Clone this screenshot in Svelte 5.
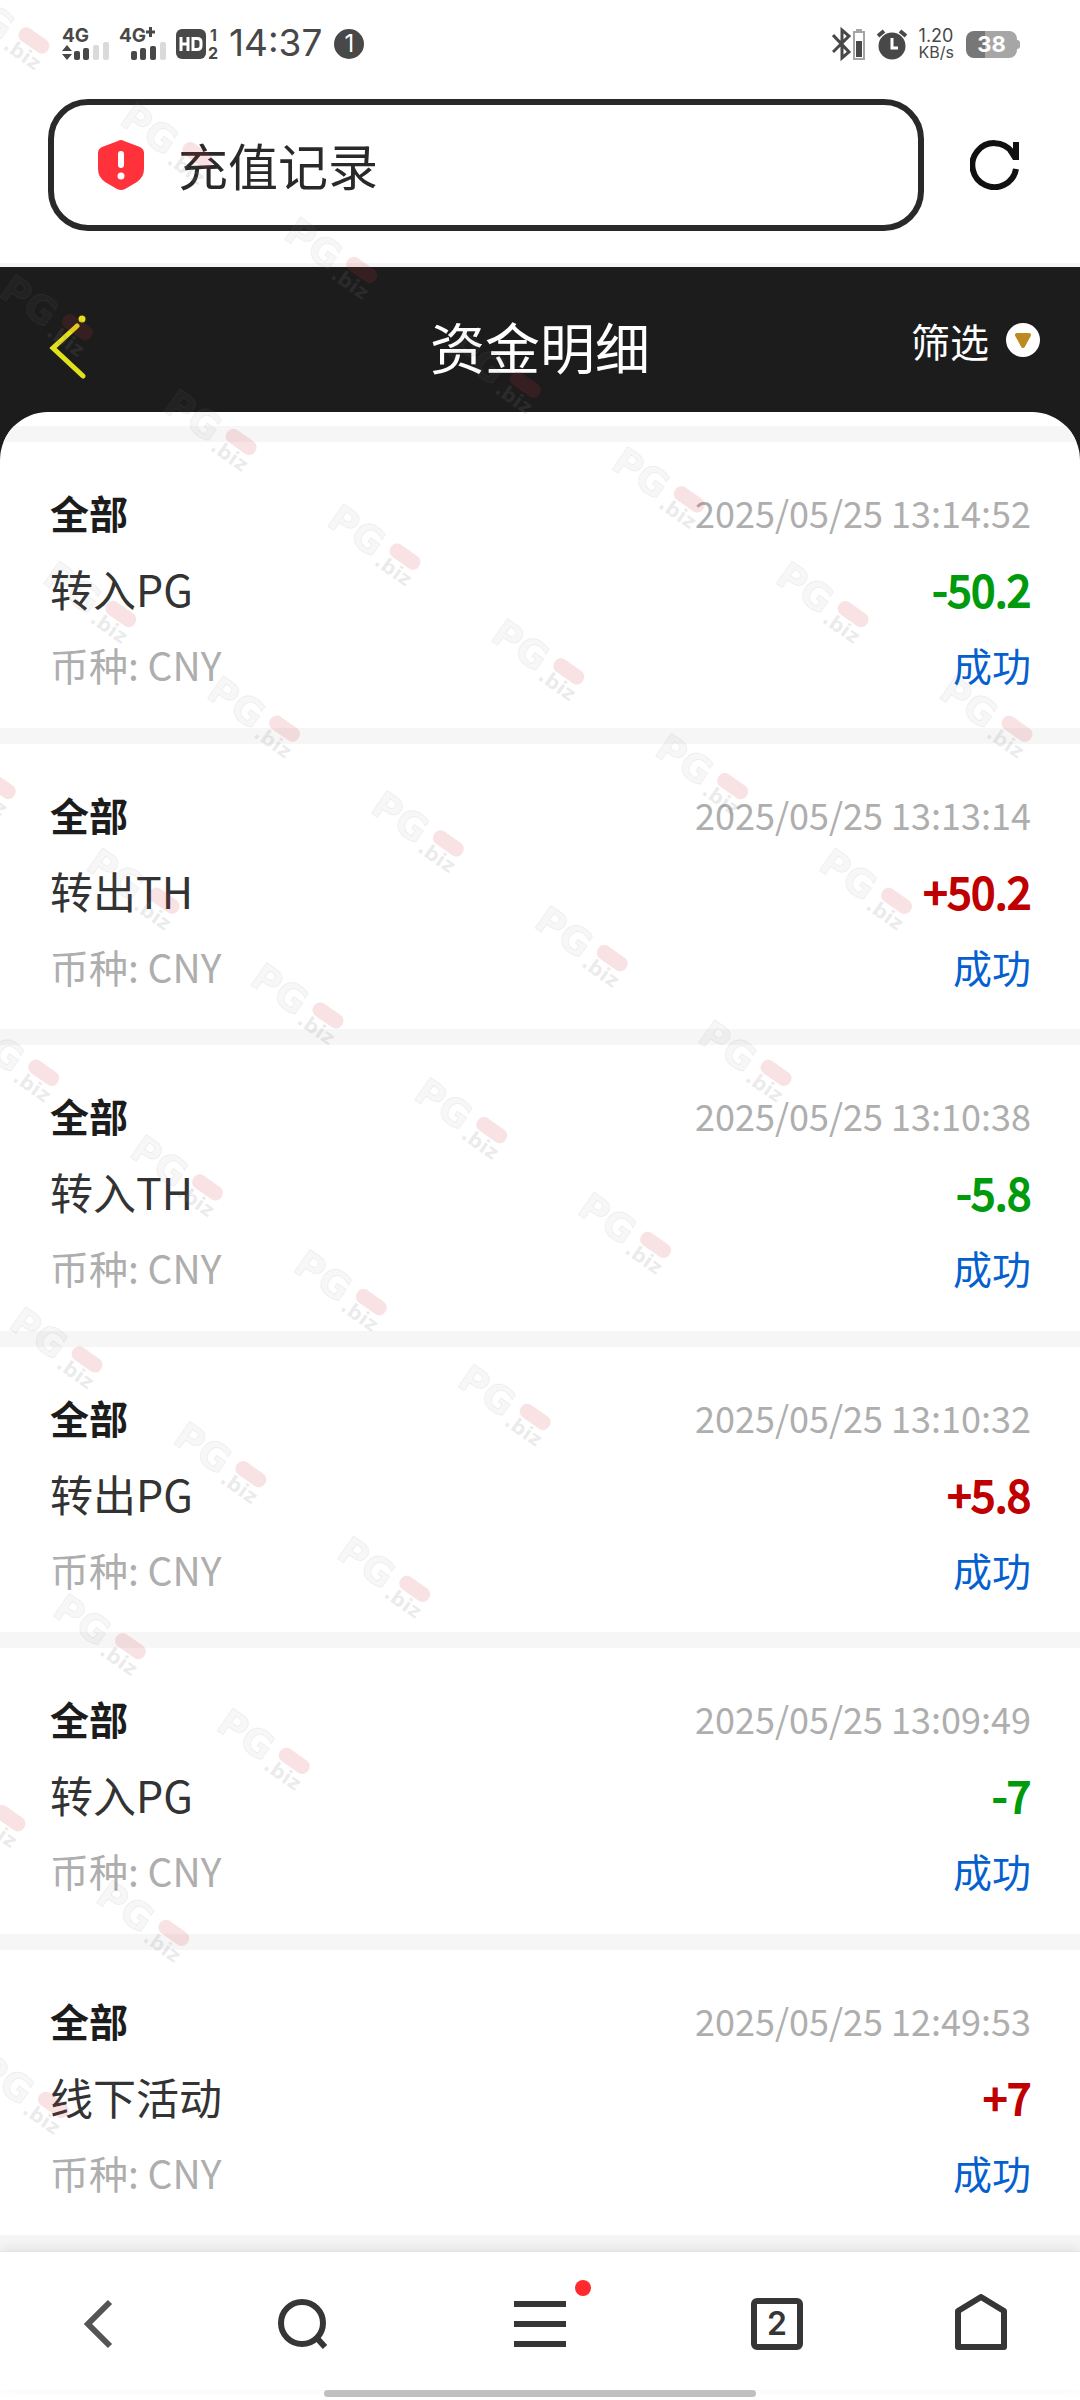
<script lang="ts">
    type Entry = { type: string; time: string; amount: string };

    const entries: Entry[] = [
        { type: '转入PG', time: '2025/05/25 13:14:52', amount: '-50.2' },
        { type: '转出TH', time: '2025/05/25 13:13:14', amount: '+50.2' },
        { type: '转入TH', time: '2025/05/25 13:10:38', amount: '-5.8' },
        { type: '转出PG', time: '2025/05/25 13:10:32', amount: '+5.8' },
        { type: '转入PG', time: '2025/05/25 13:09:49', amount: '-7' },
        { type: '线下活动', time: '2025/05/25 12:49:53', amount: '+7' }
    ];

    // --- Watermark grid, tilted 35deg: columns run down-right, rows down-left ---
    const stepX = 200;
    const stepY = 210;
    const lastCol = 5;
    // first column of each row that still reaches the screen
    const firstCols = [-1, 0, 1, 1, 2, 3, 4, 4, 5];
    const marks = firstCols.flatMap((first, row) =>
        Array.from({ length: lastCol - first + 1 }, (_, i) => ({ x: (first + i) * stepX, y: row * stepY }))
    );
</script>

<div class="screen">
    <header class="status">
        <div class="status-group">
            <svg width="48" height="36" viewBox="0 0 48 36" aria-label="4G">
                <text class="net" x="0" y="16">4G</text>
                <path d="M0 25L5 19L10 25ZM0 28L5 34L10 28Z" fill="#484848" />
                <rect x="12" y="25" width="6" height="9" rx="2" fill="#484848" />
                <rect x="21" y="22" width="6" height="12" rx="2" fill="#484848" />
                <rect x="31" y="19" width="6" height="15" rx="2" fill="#dadada" />
                <rect x="41" y="16" width="6" height="18" rx="2" fill="#dadada" />
            </svg>
            <svg width="48" height="36" viewBox="0 0 48 36" aria-label="4G+">
                <text class="net" x="0" y="16">4G</text>
                <path d="M27 6H36M31.500 1V11" stroke="#484848" stroke-width="3" />
                <rect x="12" y="25" width="6" height="9" rx="2" fill="#484848" />
                <rect x="21" y="22" width="6" height="12" rx="2" fill="#484848" />
                <rect x="31" y="20" width="6" height="14" rx="2" fill="#484848" />
                <rect x="41" y="16" width="6" height="18" rx="2" fill="#dadada" />
            </svg>
            <svg width="44" height="36" viewBox="0 0 44 36" aria-label="HD">
                <rect x="0" y="3" width="30" height="30" rx="6" fill="#484848" />
                <path d="M5 11V25M12 11V25M5 18H12M17 12.500H21Q25 12.500 25 16V20Q25 23.500 21 23.500H17Z" fill="none" stroke="#fff" stroke-width="3" />
                <text class="sim" x="34" y="15">1</text>
                <text class="sim" x="32" y="33">2</text>
            </svg>
            <span class="clock">14:37</span>
            <span class="notice">1</span>
        </div>
        <div class="status-group right">
            <svg width="33" height="36" viewBox="0 0 33 36" aria-label="蓝牙">
                <path d="M1 9L17 26L10 32V4L17 10L1 26" fill="none" stroke="#484848" stroke-width="3" />
                <rect x="22" y="6" width="10" height="27" fill="none" stroke="#a5a5a5" stroke-width="2" />
                <path d="M24 4H30" stroke="#a5a5a5" stroke-width="2" />
                <rect x="24" y="15" width="6" height="16" fill="#484848" />
            </svg>
            <svg width="30" height="36" viewBox="0 0 30 36" aria-label="闹钟">
                <circle cx="15" cy="20" r="13.500" fill="#484848" />
                <path d="M1 10L7 5M29 10L23 5" stroke="#484848" stroke-width="4" />
                <path d="M15 12V22H21" fill="none" stroke="#fff" stroke-width="3" />
            </svg>
            <span class="speed"><span>1.20</span><small>KB/s</small></span>
            <span class="battery">38</span>
        </div>
    </header>

    <div class="browser-bar">
        <button class="address">
            <svg width="46" height="50" viewBox="0 0 46 50" aria-hidden="true">
                <path d="M20 1Q23 -1 26 1L42 7Q46 9 46 13V29Q46 37 39 42L27 49Q23 51 19 49L7 42Q0 37 0 29V13Q0 9 4 7Z" fill="#ff313b" />
                <path d="M23 14V25" stroke="#fff" stroke-width="6" stroke-linecap="round" />
                <circle cx="23" cy="36" r="3.500" fill="#fff" />
            </svg>
            <span>充值记录</span>
        </button>
        <button aria-label="刷新">
            <svg width="50" height="50" viewBox="0 0 50 50">
                <path d="M46 29A22 22 0 1 1 42 12" fill="none" stroke="#111" stroke-width="6" />
                <path d="M43 2H49V20H43L38 12L43 9Z" fill="#111" />
            </svg>
        </button>
    </div>

    <main>
        <div class="title-bar">
            <button class="back" aria-label="返回">
                <svg width="38" height="64" viewBox="0 0 38 64">
                    <path d="M28 11L4 33L34 61" fill="none" stroke="#e2e21c" stroke-width="5" stroke-linecap="round" />
                    <circle cx="33" cy="4" r="3.500" fill="#e2e21c" />
                </svg>
            </button>
            <h1>资金明细</h1>
            <button class="filter">
                筛选
                <svg width="34" height="34" viewBox="0 0 34 34" aria-hidden="true">
                    <circle cx="17" cy="17" r="17" fill="#fff" />
                    <path d="M11 12H23L17 23Z" fill="#bb8a20" stroke="#bb8a20" stroke-width="4" stroke-linejoin="round" />
                </svg>
            </button>
        </div>

        <ul class="list">
            {#each entries as entry}
                <li class="entry">
                    <div class="row">
                        <strong>全部</strong>
                        <time>{entry.time}</time>
                    </div>
                    <div class="row">
                        <span class="type">{entry.type}</span>
                        <span class="amount" class:out={entry.amount.startsWith('-')}>{entry.amount}</span>
                    </div>
                    <div class="row">
                        <span class="currency">币种: CNY</span>
                        <span class="state">成功</span>
                    </div>
                </li>
            {/each}
        </ul>
    </main>

    <nav>
        <button aria-label="后退">
            <svg width="52" height="60" viewBox="0 0 52 60">
                <path d="M37 8L15 30L37 52" fill="none" stroke="#555" stroke-width="6" />
            </svg>
        </button>
        <button aria-label="搜索">
            <svg width="52" height="60" viewBox="0 0 52 60">
                <circle cx="25" cy="29" r="21" fill="none" stroke="#363636" stroke-width="6" />
                <path d="M38 42L48 53" stroke="#363636" stroke-width="6" />
            </svg>
        </button>
        <button aria-label="菜单">
            <span class="menu">
                <svg width="52" height="60" viewBox="0 0 52 60">
                    <path d="M0 10H52M0 30H52M0 50H52" stroke="#363636" stroke-width="6" />
                </svg>
                <span class="dot"></span>
            </span>
        </button>
        <button aria-label="标签页"><span class="tabs">2</span></button>
        <button aria-label="主页">
            <svg width="52" height="60" viewBox="0 0 52 60">
                <path d="M26 3L49 17V53H3V17Z" fill="none" stroke="#363636" stroke-width="6" stroke-linejoin="round" />
            </svg>
        </button>
    </nav>
    <div class="home-indicator"></div>

    <svg class="watermark" aria-hidden="true">
        <g transform="translate(136 104) rotate(35)">
            {#each marks as mark}
                <g transform="translate({mark.x} {mark.y})">
                    <text class="mark-name" x="-4" y="26">PG</text>
                    <rect x="63" y="-1" width="34" height="15" rx="7" fill="#d8323c" fill-opacity="0.14" />
                    <text class="mark-domain" x="58" y="31">.biz</text>
                </g>
            {/each}
        </g>
    </svg>
</div>

<style>
    :global(body) {
        margin: 0;
        background: #fff;
    }

    .screen {
        position: relative;
        display: flex;
        flex-direction: column;
        min-height: 100vh;
        overflow: hidden;
        font-family: 'Noto Sans CJK SC', sans-serif;
        color: #1c1c1c;
    }

    button {
        display: flex;
        align-items: center;
        margin: 0;
        padding: 0;
        border: 0;
        background: none;
        color: inherit;
        font: inherit;
    }

    svg {
        display: block;
        flex: none;
    }

    .status {
        display: flex;
        align-items: center;
        justify-content: space-between;
        height: 36px;
        padding: 26px 63px 0 62px;
        font-family: Inter, sans-serif;
        color: #484848;
    }

    .status-group {
        display: flex;
        align-items: center;
        gap: 9px;
    }

    .right {
        gap: 12px;
    }

    .net {
        font-size: 19px;
        font-weight: 700;
        fill: #484848;
    }

    .sim {
        font-size: 16px;
        font-weight: 700;
        fill: #484848;
    }

    .clock {
        font-size: 37px;
        line-height: 34px;
        padding-bottom: 2px;
    }

    .notice {
        width: 30px;
        margin-left: 3px;
        border-radius: 50%;
        background: #484848;
        color: #fff;
        font-size: 24px;
        line-height: 30px;
        text-align: center;
    }

    .speed {
        display: flex;
        flex-direction: column;
        font-size: 18px;
        line-height: 17px;
    }

    .speed small {
        font-size: 16px;
    }

    .battery {
        position: relative;
        width: 51px;
        border-radius: 8px;
        background: linear-gradient(90deg, #777 38%, #a6a6a6 38%);
        color: #fff;
        font-size: 22px;
        font-weight: 700;
        line-height: 27px;
        text-align: center;
    }

    .battery::after {
        content: '';
        position: absolute;
        top: 9px;
        right: -3px;
        width: 3px;
        height: 9px;
        border-radius: 0 3px 3px 0;
        background: #a6a6a6;
    }

    .browser-bar {
        display: flex;
        align-items: center;
        gap: 46px;
        padding: 37px 60px 32px 48px;
        border-bottom: 4px solid #f5f5f5;
    }

    .address {
        flex: 1;
        gap: 34px;
        height: 132px;
        padding: 0 44px;
        border: 6px solid #292929;
        border-radius: 40px;
        color: #292929;
        font-size: 50px;
    }

    .address span {
        padding-bottom: 2px;
    }

    main {
        flex: 1;
        display: flex;
        flex-direction: column;
        background: #1c1c1c;
    }

    .title-bar {
        display: grid;
        grid-template-columns: 1fr auto 1fr;
        align-items: center;
        height: 131px;
        padding: 14px 40px 0;
        color: #fff;
    }

    .back {
        justify-self: start;
        margin-left: 9px;
    }

    h1 {
        margin: 0;
        padding-bottom: 4px;
        font-size: 55px;
        font-weight: 400;
        line-height: 80px;
    }

    .filter {
        justify-self: end;
        gap: 17px;
        padding-bottom: 14px;
        font-size: 39px;
    }

    .list {
        flex: 1;
        display: flex;
        flex-direction: column;
        margin: 0;
        padding: 14px 0 0;
        border-radius: 48px 48px 0 0;
        background: #fff;
        list-style: none;
        overflow: hidden;
    }

    .entry {
        flex: 1;
        padding: 32px 49px 25px 50px;
        border-top: 16px solid #f6f6f6;
    }

    .entry:last-child {
        flex: 1 0 auto;
        border-bottom: 16px solid #f6f6f6;
    }

    .row {
        display: flex;
        align-items: center;
        justify-content: space-between;
        height: 76px;
        font-size: 39px;
        line-height: 76px;
    }

    time {
        color: #aeaeae;
        font-size: 36px;
    }

    .type {
        color: #333;
        font-size: 43px;
    }

    .amount {
        color: #c00000;
        font-size: 43px;
        -webkit-text-stroke: 2px currentColor;
    }

    .out {
        color: #009a0d;
    }

    .currency {
        color: #aeaeae;
    }

    .state {
        color: #0560cf;
    }

    nav {
        display: grid;
        grid-template-columns: 33fr 35fr 44fr 35fr 33fr;
        align-items: center;
        justify-items: center;
        height: 132px;
        padding-top: 6px;
        border-top: 1px solid #e4e4e4;
        background: #fff;
        box-shadow: 0 -4px 12px rgba(0, 0, 0, 0.08);
    }

    .menu {
        position: relative;
    }

    .dot {
        position: absolute;
        top: -14px;
        right: -25px;
        width: 16px;
        height: 16px;
        border-radius: 50%;
        background: #ff2a2e;
    }

    .tabs {
        width: 40px;
        border: 6px solid #363636;
        border-radius: 6px;
        color: #363636;
        font-family: Inter, sans-serif;
        font-size: 32px;
        font-weight: 600;
        line-height: 40px;
        text-align: center;
    }

    .home-indicator {
        align-self: center;
        width: 40%;
        height: 7px;
        margin-bottom: 3px;
        border-radius: 4px;
        background: #c0c0c0;
    }

    .watermark {
        position: absolute;
        inset: 0;
        width: 100%;
        height: 100%;
        pointer-events: none;
    }

    .mark-name,
    .mark-domain {
        font-family: 'DejaVu Sans', sans-serif;
        font-weight: 700;
        fill: rgba(128, 128, 128, 0.06);
        stroke: rgba(128, 128, 128, 0.12);
        stroke-width: 1px;
    }

    .mark-name {
        font-size: 38px;
    }

    .mark-domain {
        font-size: 20px;
        stroke: none;
        fill: rgba(128, 128, 128, 0.16);
    }
</style>
